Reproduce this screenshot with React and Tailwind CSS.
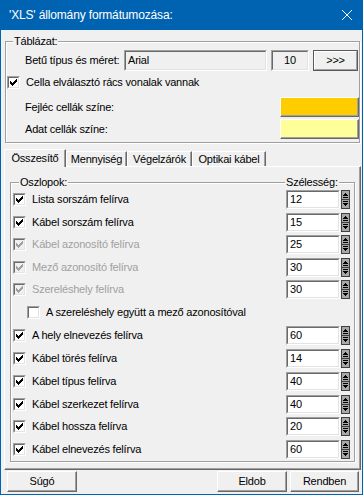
import React from "react";

function Check({ checked, disabled }) {
  return (
    <span className="flex-none block w-[13px] h-[13px] border border-t-[#a0a0a0] border-l-[#a0a0a0] border-b-white border-r-white">
      <span
        className={
          "block w-full h-full border border-t-[#696969] border-l-[#696969] border-b-[#e3e3e3] border-r-[#e3e3e3] " +
          (disabled ? "bg-[#f0f0f0]" : "bg-white")
        }
      >
        {checked && (
          <svg width="7" height="7" viewBox="0 0 7 7" shapeRendering="crispEdges" className="block m-[1px]">
            <path
              d="M6 0h1v1h-1z M5 1h2v1h-2z M0 2h1v1h-1z M4 2h3v1h-3z M0 3h2v1h-2z M3 3h3v1h-3z M0 4h5v1h-5z M1 5h3v1h-3z M2 6h1v1h-1z"
              fill={disabled ? "#a0a0a0" : "#000"}
            />
          </svg>
        )}
      </span>
    </span>
  );
}

function Spin() {
  return (
    <svg width="9" height="19" viewBox="0 0 9 19" shapeRendering="crispEdges" className="block flex-none">
      <rect x="0" y="0" width="9" height="19" fill="#404040" />
      <rect x="1" y="1" width="7" height="8" fill="#a8a8a8" />
      <rect x="1" y="10" width="7" height="8" fill="#a8a8a8" />
      <path d="M4 3h1v1h-1z M3 4h3v1h-3z M2 5h5v1h-5z M2 7h5v1h-5z" fill="#000" />
      <path d="M2 11h5v1h-5z M2 13h5v1h-5z M3 14h3v1h-3z M4 15h1v1h-1z" fill="#000" />
    </svg>
  );
}

function Sunken({ className, innerClass, children }) {
  return (
    <div className={"border border-t-[#a0a0a0] border-l-[#a0a0a0] border-b-white border-r-white " + className}>
      <div
        className={
          "w-full h-full border border-t-[#696969] border-l-[#696969] border-b-[#e3e3e3] border-r-[#e3e3e3] flex items-center " +
          innerClass
        }
      >
        {children}
      </div>
    </div>
  );
}

function Button({ className, children }) {
  return (
    <div
      className={
        "flex items-center justify-center border border-t-white border-l-white border-b-[#696969] border-r-[#696969] shadow-[inset_-1px_-1px_0_#a0a0a0] bg-[#f0f0f0] " +
        className
      }
    >
      {children}
    </div>
  );
}

const rows = [
  { label: "Lista sorszám felírva", value: "12", h: 23 },
  { label: "Kábel sorszám felírva", value: "15", h: 22 },
  { label: "Kábel azonosító felírva", value: "25", h: 23, disabled: true },
  { label: "Mező azonosító felírva", value: "30", h: 22, disabled: true },
  { label: "Szereléshely felírva", value: "30", h: 23, disabled: true },
  { label: "A szereléshely együtt a mező azonosítóval", h: 23, indent: true, unchecked: true },
  { label: "A hely elnevezés felírva", value: "60", h: 23 },
  { label: "Kábel törés felírva", value: "14", h: 23 },
  { label: "Kábel típus felírva", value: "40", h: 23 },
  { label: "Kábel szerkezet felírva", value: "40", h: 22 },
  { label: "Kábel hossza felírva", value: "20", h: 23 },
  { label: "Kábel elnevezés felírva", value: "60", h: 23 },
];

export default function App() {
  return (
    <div className="w-[363px] h-[495px] bg-[#f0f0f0] border-x border-b border-[#0063b1] flex flex-col overflow-hidden font-['Liberation_Sans',Arial,sans-serif] text-[11px] leading-[13px] tracking-[-0.2px] text-black">
      {/* Title bar */}
      <div className="h-[30px] flex-none bg-[#0063b1] flex items-center pl-[8px] pr-[10px] text-white text-[12px] tracking-[-0.15px]">
        <span className="flex-1">'XLS' állomány formátumozása:</span>
        <svg width="10" height="10" viewBox="0 0 10 10" className="block">
          <path d="M0 0L10 10M10 0L0 10" stroke="#fff" strokeWidth="1" />
        </svg>
      </div>

      {/* Táblázat group */}
      <div className="relative flex-none mt-[11px] ml-[4px] w-[355px] h-[102px] border border-[#a0a0a0] shadow-[inset_1px_1px_0_#fff,1px_1px_0_#fff]">
        <span className="absolute -top-[7px] left-[7px] px-[1px] bg-[#f0f0f0]">Táblázat:</span>
        <div className="mt-[8px] h-[21px] flex items-center pl-[19px]">
          <span className="w-[99px] flex-none">Betű típus és méret:</span>
          <Sunken className="w-[143px] h-[21px] flex-none" innerClass="bg-[#f0f0f0] pl-[2px]">
            Arial
          </Sunken>
          <Sunken className="w-[38px] h-[21px] flex-none ml-[4px]" innerClass="bg-[#f0f0f0] justify-center">
            10
          </Sunken>
          <div className="ml-[4px] w-[45px] h-[21px] flex-none border border-[#5a5a5a]">
            <div className="w-full h-full flex items-center justify-center border border-t-white border-l-white border-b-[#a0a0a0] border-r-[#a0a0a0]">
              &gt;&gt;&gt;
            </div>
          </div>
        </div>
        <div className="mt-[5px] h-[13px] flex items-center pl-[1px] gap-[6px]">
          <Check checked />
          <span>Cella elválasztó rács vonalak vannak</span>
        </div>
        <div className="mt-[8px] h-[20px] flex items-center justify-between pl-[19px]">
          <span>Fejléc cellák színe:</span>
          <div className="w-[79px] h-[20px] bg-[#ffcc00] border border-t-white border-l-white border-b-[#696969] border-r-[#696969] shadow-[inset_-1px_-1px_0_#a0a0a0]" />
        </div>
        <div className="mt-[2px] h-[20px] flex items-center justify-between pl-[19px]">
          <span>Adat cellák színe:</span>
          <div className="w-[79px] h-[20px] bg-[#ffff99] border border-t-white border-l-white border-b-[#696969] border-r-[#696969] shadow-[inset_-1px_-1px_0_#a0a0a0]" />
        </div>
      </div>

      {/* Tabs */}
      <div className="mt-[6px] ml-[3px] h-[17px] flex items-end flex-none">
        <div className="relative z-10 -mb-[1px] h-[18px] w-[62px] bg-[#f0f0f0] border-t border-l border-white border-r border-r-[#696969] shadow-[inset_-1px_0_0_#a0a0a0] flex items-center justify-center">
          Összesítő
        </div>
        <div className="h-[15px] w-[61px] border-t border-l border-white border-r border-r-[#696969] shadow-[inset_-1px_0_0_#a0a0a0] flex items-center justify-center pt-[1px]">
          Mennyiség
        </div>
        <div className="h-[15px] w-[65px] border-t border-l border-white border-r border-r-[#696969] shadow-[inset_-1px_0_0_#a0a0a0] flex items-center justify-center pt-[1px]">
          Végelzárók
        </div>
        <div className="h-[15px] w-[74px] border-t border-l border-white border-r border-r-[#696969] shadow-[inset_-1px_0_0_#a0a0a0] flex items-center justify-center pt-[1px]">
          Optikai kábel
        </div>
      </div>

      {/* Tab panel */}
      <div className="flex-none ml-[3px] w-[357px] h-[304px] border border-t-white border-l-white border-r-[#696969] border-b-[#696969] shadow-[inset_-1px_-1px_0_#a0a0a0]">
        <div className="relative mt-[15px] ml-[5px] w-[345px] h-[280px] border border-[#a0a0a0] shadow-[inset_1px_1px_0_#fff,1px_1px_0_#fff] pt-[5px]">
          <span className="absolute -top-[7px] left-[8px] px-[1px] bg-[#f0f0f0]">Oszlopok:</span>
          <span className="absolute -top-[7px] left-[274px] px-[1px] bg-[#f0f0f0]">Szélesség:</span>
          {rows.map((r, i) => (
            <div
              key={i}
              className={
                "flex items-center pr-[4px] " +
                (r.h === 22 ? "h-[22px] " : "h-[23px] ") +
                (r.indent ? "pl-[16px]" : "pl-[2px]")
              }
            >
              <Check checked={!r.unchecked} disabled={r.disabled} />
              <span className={"flex-1 ml-[6px] " + (r.disabled ? "text-[#a0a0a0]" : "")}>{r.label}</span>
              {r.value && (
                <>
                  <Sunken className="w-[54px] h-[19px] flex-none" innerClass="bg-white pl-[2px]">
                    {r.value}
                  </Sunken>
                  <div className="ml-[1px]">
                    <Spin />
                  </div>
                </>
              )}
            </div>
          ))}
        </div>
      </div>

      {/* Buttons */}
      <div className="mt-[1px] h-[21px] flex flex-none">
        <Button className="ml-[6px] w-[70px] h-[21px]">Súgó</Button>
        <div className="flex-1" />
        <Button className="w-[70px] h-[21px]">Eldob</Button>
        <Button className="ml-[3px] mr-[3px] w-[69px] h-[21px]">Rendben</Button>
      </div>
    </div>
  );
}
